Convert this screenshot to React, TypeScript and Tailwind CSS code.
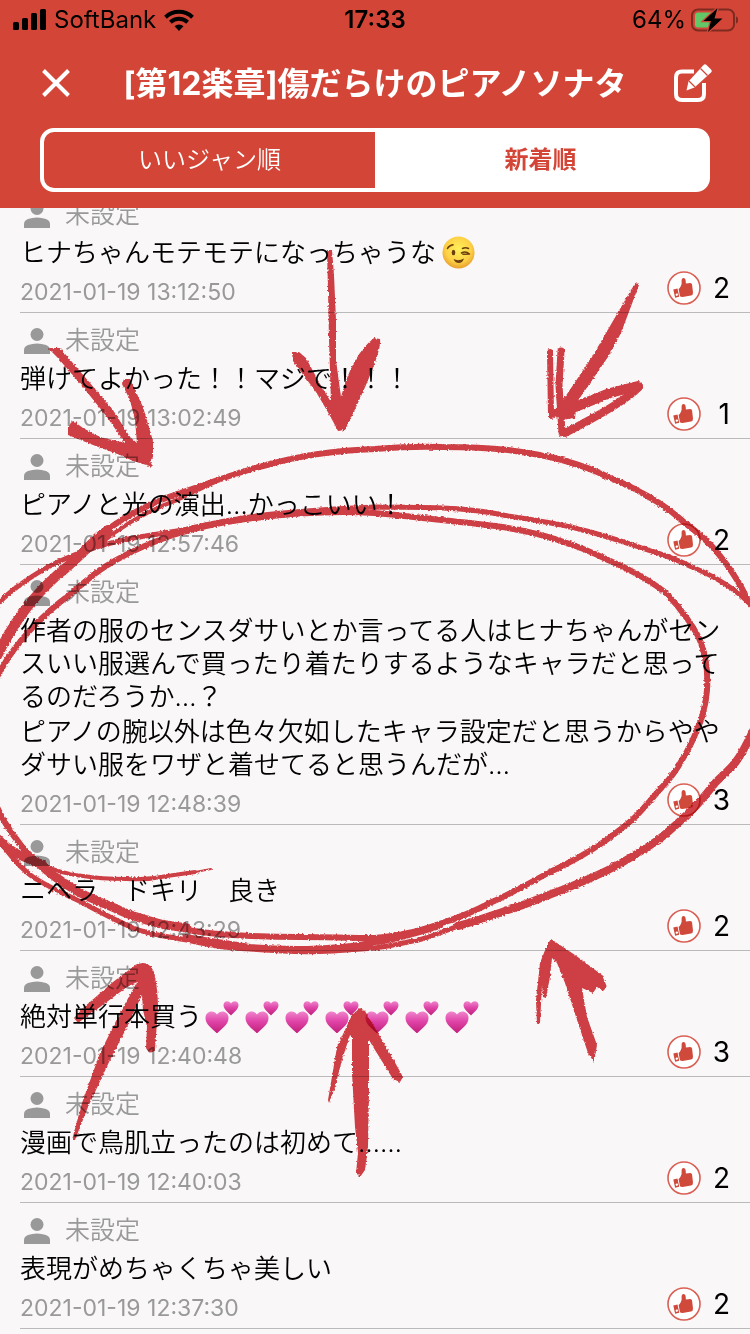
import React from "react";

type Comment = {
  id: string;
  paragraphs: string[];
  emoji?: "wink" | "hearts";
  date: string;
  likes: number;
};

const comments: Comment[] = [
  { id: "c1", paragraphs: ["ヒナちゃんモテモテになっちゃうな"], emoji: "wink", date: "2021-01-19 13:12:50", likes: 2 },
  { id: "c2", paragraphs: ["弾けてよかった！！マジで！！！"], date: "2021-01-19 13:02:49", likes: 1 },
  { id: "c3", paragraphs: ["ピアノと光の演出…かっこいい！"], date: "2021-01-19 12:57:46", likes: 2 },
  {
    id: "c4",
    paragraphs: [
      "作者の服のセンスダサいとか言ってる人はヒナちゃんがセンスいい服選んで買ったり着たりするようなキャラだと思ってるのだろうか…？",
      "ピアノの腕以外は色々欠如したキャラ設定だと思うからややダサい服をワザと着せてると思うんだが…",
    ],
    date: "2021-01-19 12:48:39",
    likes: 3,
  },
  { id: "c5", paragraphs: ["ニヘラ　ドキリ　良き"], date: "2021-01-19 12:43:29", likes: 2 },
  { id: "c6", paragraphs: ["絶対単行本買う"], emoji: "hearts", date: "2021-01-19 12:40:48", likes: 3 },
  { id: "c7", paragraphs: ["漫画で鳥肌立ったのは初めて……"], date: "2021-01-19 12:40:03", likes: 2 },
  { id: "c8", paragraphs: ["表現がめちゃくちゃ美しい"], date: "2021-01-19 12:37:30", likes: 2 },
];

function StatusBar() {
  return (
    <div className="grid h-10 grid-cols-3 items-center px-3 text-2xl leading-10 text-black">
      <div className="flex items-center gap-2">
        <svg className="h-[22px] w-[34px]" viewBox="0 0 34 22" aria-hidden="true">
          <rect x="1" y="13" width="6" height="8" rx="1.5" />
          <rect x="10" y="9" width="6" height="12" rx="1.5" />
          <rect x="19" y="4" width="6" height="17" rx="1.5" />
          <rect x="28" y="0" width="6" height="21" rx="1.5" />
        </svg>
        <span>SoftBank</span>
        <svg className="h-[22px] w-[30px]" viewBox="0 0 30 22" aria-hidden="true">
          <g fill="none" stroke="#000" strokeWidth="4">
            <path d="M1.5 8.2 A19.5 19.5 0 0 1 28.500 8.200" />
            <path d="M6.400 13.300 A12.500 12.500 0 0 1 23.600 13.300" />
          </g>
          <path d="M10.500 17.300 A6.500 6.500 0 0 1 19.500 17.300 L15 22 Z" />
        </svg>
      </div>
      <div className="text-center font-semibold">17:33</div>
      <div className="flex items-center justify-end gap-1">
        <span>64%</span>
        <svg className="h-6 w-12" viewBox="0 0 48 24" aria-label="充電中">
          <rect x="2" y="1.500" width="42" height="21" rx="6" fill="none" stroke="#7d2a21" strokeWidth="2" />
          <path d="M46 8.500 C49 9.500 49 14.500 46 15.500 Z" fill="#7d2a21" />
          <rect x="5" y="4.500" width="20" height="15" rx="3" fill="#62c766" />
          <path d="M27.500 0 L13.500 13 H21 L18 24 L32.500 10.500 H24.500 Z" stroke="#d34637" strokeWidth="2.500" paintOrder="stroke" />
        </svg>
      </div>
    </div>
  );
}

function CloseIcon() {
  return (
    <svg className="size-8" viewBox="0 0 32 32" fill="none" stroke="#fff" strokeWidth="4" aria-hidden="true">
      <path d="M3.500 2.500 L28.500 27.500 M28.500 2.500 L3.500 27.500" />
    </svg>
  );
}

function EditIcon() {
  return (
    <svg className="size-10" viewBox="0 0 40 40" aria-hidden="true">
      <path
        d="M20 7.500 H8 Q2 7.500 2 13.500 V30 Q2 36 8 36 H24 Q30 36 30 30 V19"
        fill="none"
        stroke="#fff"
        strokeWidth="4"
      />
      <path
        d="M29.500 1 Q31 -.5 32.500 1 L37 5.500 Q38.500 7 37 8.500 L20.500 23.500 L12.500 26.500 L14.500 17.500 Z"
        fill="#fff"
        stroke="#d34637"
        strokeWidth="2.500"
        paintOrder="stroke"
      />
      <path d="M26.500 4.500 L33.500 11.500 M15 17 L21 23" stroke="#d34637" strokeWidth="1.300" />
    </svg>
  );
}

function PersonIcon() {
  return (
    <svg className="size-[26px]" viewBox="0 0 26 26" fill="#999" aria-hidden="true">
      <circle cx="13" cy="6.500" r="6.500" />
      <path d="M0 26 V22 Q0 18.500 4 17 Q13 13.800 22 17 Q26 18.500 26 22 V26 Z" />
    </svg>
  );
}

function ThumbIcon() {
  return (
    <svg className="size-[34px]" viewBox="0 0 34 34" aria-hidden="true">
      <circle cx="17" cy="17" r="16" fill="#fff" stroke="#da5f54" strokeWidth="1.600" />
      <g fill="#d04a3c">
        <path d="M11.600 18 Q12.800 17.300 13.600 15.500 Q15.100 13.300 14.600 9.500 Q14.400 7 16.400 6.900 Q18.500 7 18.700 10 L18.900 12.600 L23.200 12 Q25 12 25.100 13.800 L26 21.500 Q26.100 24 24 24.500 L17 25.800 Q14 26.200 13 25.200 Z" />
        <path
          fillRule="evenodd"
          d="M6.300 18.600 L10.500 17.600 L12.200 25.800 L8.100 26.800 Z M9 22.800 A1.200 1.200 0 1 0 11 23.500 A1.200 1.200 0 0 0 9 22.800 Z"
        />
      </g>
    </svg>
  );
}

function WinkEmoji() {
  return (
    <svg className="inline-block h-[33px] w-10 align-top" viewBox="0 0 40 33" role="img" aria-label="😉">
      <defs>
        <radialGradient id="face" cx=".5" cy=".4" r=".62">
          <stop offset="0" stopColor="#fff05a" />
          <stop offset=".65" stopColor="#fdd045" />
          <stop offset="1" stopColor="#e59a2c" />
        </radialGradient>
      </defs>
      <circle cx="22.500" cy="16.500" r="16" fill="url(#face)" />
      <ellipse cx="17.500" cy="16.500" rx="1.800" ry="2.700" fill="#6b3f0f" />
      <g fill="none" stroke="#6b3f0f" strokeWidth="1.600" strokeLinecap="round">
        <path d="M11.500 12.500 Q13 9.500 17 8.800" />
        <path d="M25.500 17 Q29.500 14.500 33.500 18 M27 18.300 L33.500 18" />
        <path d="M26.500 12.500 Q29.500 11 32.500 12.500" />
      </g>
      <path d="M17.500 23 Q22.500 25.500 28 22.500 Q26.500 27 22.800 27 Q19 27 17.500 23 Z" fill="#6b3f0f" />
    </svg>
  );
}

function HeartsEmoji() {
  return (
    <svg className="inline-block h-[33px] w-10 align-top" viewBox="0 0 40 33" role="img" aria-label="💕">
      <defs>
        <linearGradient id="heart" x1="0" y1="0" x2="0" y2="1">
          <stop offset="0" stopColor="#ef86cd" />
          <stop offset=".45" stopColor="#e044a8" />
          <stop offset="1" stopColor="#c01f78" />
        </linearGradient>
      </defs>
      <path
        fill="url(#heart)"
        d="M15 33.500 C11.500 29.500 3.500 25 3.500 18 C3.500 10.500 12 9.500 15 14.500 C18 9.500 26.500 10.500 26.500 18 C26.500 25 18.500 29.500 15 33.500 Z"
      />
      <path
        fill="url(#heart)"
        d="M29 15.500 C27 13 21.500 9.500 21.500 5 C21.500 .5 27 0 29 3.500 C31 0 36.500 .5 36.500 5 C36.500 9.500 31 13 29 15.500 Z"
      />
    </svg>
  );
}

function CommentItem({ comment }: { comment: Comment }) {
  return (
    <li className="ml-5 border-b border-[#bbbabb] pt-3 pr-5 pb-[7px]">
      <div className="flex h-[31px] items-center gap-[15px] pl-1 text-[25px] leading-[31px] text-[#999]">
        <PersonIcon />
        <span>未設定</span>
      </div>
      <div className="mt-[6px] flex flex-col gap-[2px] text-[26px] leading-[33px] text-black">
        {comment.paragraphs.map((text) => (
          <p key={text}>
            {text}
            {comment.emoji === "wink" && <WinkEmoji />}
            {comment.emoji === "hearts" && [0, 1, 2, 3, 4, 5, 6].map((n) => <HeartsEmoji key={n} />)}
          </p>
        ))}
      </div>
      <div className="mt-[2px] flex h-[34px] items-end justify-between font-normal">
        <time className="text-[23px] leading-[26px] text-[#999]">{comment.date}</time>
        <button type="button" aria-label="いいジャン" className="flex items-center text-[28px] leading-[34px]">
          <ThumbIcon />
          <span className="w-[29px] text-right">{comment.likes}</span>
        </button>
      </div>
    </li>
  );
}

function PenMarks() {
  return (
    <svg
      className="pointer-events-none absolute top-0 left-0 z-20 h-auto w-full mix-blend-multiply"
      viewBox="0 0 750 1334"
      aria-hidden="true"
    >
      <defs>
        <filter id="rough" x="-2%" y="-2%" width="104%" height="104%">
          <feTurbulence type="fractalNoise" baseFrequency=".5" numOctaves="2" seed="4" result="noise" />
          <feDisplacementMap in="SourceGraphic" in2="noise" scale="3" xChannelSelector="R" yChannelSelector="G" />
        </filter>
      </defs>
      <g filter="url(#rough)">
        <g fill="#d24046">
          <path d="M327 250 L332 250 L334 275 L336 320 L336 360 L341 397 Q352 355 374 338 L380 339 Q382 348 366 385 Q355 410 345 430 L338 431 Q330 415 316 392 L293 361 L292 353 L299 352 L306 358 L320 384 L331 402 L329 340 L328 290 Z" />
          <path d="M48 348 L60 348 L90 383 L113 410 L130 437 L137 443 L135 420 L130 400 L122 384 L124 379 L130 379 L143 407 L153 441 L153 457 L150 461 L153 467 L133 461 L120 455 L93 445 L68 435 L68 429 L72 420 L83 428 L100 437 L125 443 L107 417 L83 387 L57 357 Z" />
          <path d="M636 282 L639 285 L621 333 L608 357 L577 402 L575 418 L560 420 L563 400 L592 357 L631 290 Z" />
          <path d="M143 963 Q150 963 154 972 Q158 990 158 1007 L155 1050 Q150 1056 146 1048 L147 1027 L143 1010 L142 995 L127 1027 L110 1060 L88 1107 L75 1140 L72 1140 L82 1103 L100 1053 L120 1013 L137 982 L127 987 L100 1007 L78 1023 L74 1018 L83 1008 L113 982 L137 964 Z" />
          <path d="M360 1008 L365 1011 L375 1028 L392 1057 L403 1077 L400 1082 L393 1079 L375 1050 L369 1040 L369 1090 L368 1147 L365 1170 L360 1177 L356 1173 L358 1153 L355 1127 L352 1073 L352 1037 L350 1035 L342 1060 L335 1087 L329 1103 L328 1100 L337 1047 L352 1015 Z" />
          <path d="M551 939 L575 955 L602 975 L607 987 L603 991 L597 987 L593 993 L582 988 L587 1017 L597 1045 L594 1062 L588 1053 L578 1023 L565 983 L557 963 L552 958 L550 977 L546 998 L543 997 L542 985 L540 1023 L537 1024 L536 1000 L540 963 L547 945 Z" />
        </g>
        <g fill="none" stroke="#d24046" strokeLinecap="round" strokeLinejoin="round">
          <path strokeWidth="6" d="M550 352 L551 416 M565 406 L552 415" />
          <path strokeWidth="7" d="M561 351 L559 385 L562 433" />
          <path strokeWidth="10" d="M558 412 L575 407 L610 393 L638 386" />
          <path strokeWidth="8" d="M639 387 Q625 402 565 433" />
          <path strokeWidth="10" d="M-3 656 C15 619 40 588 67 567 C85 551 95 539 108 530" />
          <path
            strokeWidth="6"
            d="M93 541 C115 522 145 505 177 494 C205 485 240 471 267 465 C305 454 345 450 375 449 C400 447 420 446 442 447 C470 447 490 448 508 450 C530 453 548 456 562 460 C580 465 595 470 608 477 C621 482 632 487 642 493 C659 502 674 513 685 523 C698 533 708 541 715 550 C725 561 740 582 748 601"
          />
          <path strokeWidth="4" d="M100 544 C125 523 155 508 177 500 L215 482" />
          <path
            strokeWidth="5"
            d="M-3 605 C10 590 40 569 67 558 C90 548 105 544 133 538 L183 530 C220 521 250 516 283 513 C315 510 345 508 375 507 C400 507 420 507 442 508 C468 509 490 512 508 516 C535 520 555 523 575 528 C600 534 624 542 642 548 C662 554 678 560 692 567 C714 576 735 588 752 606"
          />
          <path
            strokeWidth="6"
            d="M-3 678 C5 660 18 643 33 627 C45 615 55 605 67 597 C80 586 90 577 100 570 C125 553 150 543 173 535 C192 529 212 524 233 521 C280 514 330 510 375 513 C400 515 420 518 442 520 C468 523 490 525 508 528 C525 531 543 535 558 540 C577 546 594 553 608 560 C622 566 632 571 642 577 C654 584 662 589 668 595 C680 608 696 629 701 643 C706 657 708 675 707 690 C706 705 701 722 698 727 C694 738 687 752 682 760 C677 769 669 780 662 787 C650 801 640 813 632 820 C621 829 611 837 602 843 C586 854 565 865 548 873 C530 883 510 894 492 902 C475 911 455 919 442 923 C428 928 418 931 408 933 C395 936 385 937 375 938 C350 938 325 937 300 937 C275 937 250 936 233 935 C215 934 200 932 187 930"
          />
          <path strokeWidth="9" d="M187 928 C175 926 160 925 150 921 C137 917 125 914 117 909 C102 903 87 897 77 891 C60 881 50 874 40 864" />
          <path strokeWidth="6" d="M40 864 C30 856 23 849 17 840 C8 829 3 820 -3 807" />
          <path
            strokeWidth="8"
            d="M754 729 C748 742 742 754 735 763 C729 770 722 776 715 783 C708 792 700 802 692 810 C680 821 670 831 658 840 C642 851 624 862 608 870 C592 878 577 884 562 890 C543 897 525 905 508 910 C490 916 474 922 458 926"
          />
          <path
            strokeWidth="5"
            d="M458 926 C443 932 430 937 418 940 C403 943 390 946 375 948 L333 951 C315 952 298 952 283 951 C265 950 248 949 233 948 C215 946 200 943 187 940 C165 936 150 935 133 928 C115 920 98 911 83 903 C65 894 48 887 33 877 C20 868 6 850 -3 837"
          />
          <path strokeWidth="6" d="M440 926 C415 934 390 941 365 944 C330 950 285 950 250 947 L185 937" />
          <path strokeWidth="9" d="M-3 838 C10 852 25 859 42 864" />
          <path strokeWidth="4" d="M42 864 C55 871 72 875 83 876 C100 879 113 879 127 879 C143 880 158 878 167 876 L195 872" />
          <path strokeWidth="2" d="M190 873 L211 869" />
        </g>
      </g>
    </svg>
  );
}

export default function App() {
  return (
    <div
      className="relative min-h-screen overflow-hidden bg-[#f9f7f8] font-[350]"
      style={{ fontFamily: 'Inter, "Noto Sans CJK JP", sans-serif' }}
    >
      <header className="relative z-10 bg-[#d34637] pb-4 font-normal">
        <StatusBar />
        <div className="flex h-[88px] items-center justify-between px-9">
          <button type="button" aria-label="閉じる" className="flex w-10 justify-center">
            <CloseIcon />
          </button>
          <h1 className="text-[32px] leading-10 font-bold whitespace-nowrap text-white">
            [第12楽章]傷だらけのピアノソナタ
          </h1>
          <button type="button" aria-label="コメントを書く">
            <EditIcon />
          </button>
        </div>
        <div className="mx-10 flex h-16 rounded-[14px] border-4 border-white bg-white text-2xl">
          <button type="button" aria-pressed="false" className="flex-1 rounded-l-[10px] bg-[#d34637] font-[350] text-white">
            いいジャン順
          </button>
          <button type="button" aria-pressed="true" className="flex-1 font-bold text-[#d34637]">
            新着順
          </button>
        </div>
      </header>
      <main className="overflow-hidden">
        <ul className="-mt-[21px]">
          {comments.map((comment) => (
            <CommentItem key={comment.id} comment={comment} />
          ))}
        </ul>
      </main>
      <PenMarks />
    </div>
  );
}
